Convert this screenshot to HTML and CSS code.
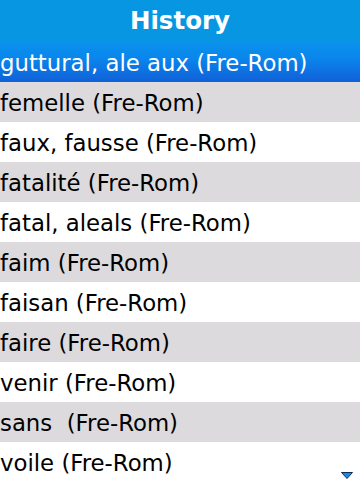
FILE: index.html
```html
<!DOCTYPE html>
<html>
<head>
<meta charset="utf-8">
<link rel="stylesheet" href="styles.css">
</head>
<body>
<div class="screen">
  <div class="title">History</div>
  <ul class="list">
    <li class="item selected">guttural, ale aux (Fre-Rom)</li>
    <li class="item odd">femelle (Fre-Rom)</li>
    <li class="item">faux, fausse (Fre-Rom)</li>
    <li class="item odd">fatalité (Fre-Rom)</li>
    <li class="item">fatal, aleals (Fre-Rom)</li>
    <li class="item odd">faim (Fre-Rom)</li>
    <li class="item">faisan (Fre-Rom)</li>
    <li class="item odd">faire (Fre-Rom)</li>
    <li class="item">venir (Fre-Rom)</li>
    <li class="item odd">sans&nbsp; (Fre-Rom)</li>
    <li class="item">voile (Fre-Rom)</li>
  </ul>
  <svg class="more" width="12" height="7" viewBox="0 0 12 7"><polygon points="0.5,0.5 11.5,0.5 6,6.5" fill="#1a8ae8" stroke="#0b2f5a" stroke-width="1"/></svg>
</div>
</body>
</html>
```
FILE: styles.css
```css
html, body {
  margin: 0;
  padding: 0;
  background: #ffffff;
}
.screen {
  position: relative;
  width: 360px;
  height: 480px;
  overflow: hidden;
  font-family: "DejaVu Sans", sans-serif;
}
.title {
  height: 42px;
  line-height: 42px;
  background: #0797e2;
  color: #ffffff;
  font-weight: bold;
  font-size: 24.5px;
  text-align: center;
}
.list {
  list-style: none;
  margin: 0;
  padding: 0;
}
.item {
  box-sizing: border-box;
  height: 40px;
  padding-top: 2px;
  line-height: 38px;
  font-size: 22.8px;
  color: #000000;
  white-space: nowrap;
  background: #ffffff;
}
.item.odd {
  background: #dcdadc;
}
.item.selected {
  color: #ffffff;
  background: linear-gradient(to bottom, #0992ec 0%, #0a86ec 40%, #1160d8 100%);
}
.more {
  position: absolute;
  left: 341px;
  top: 472px;
}
```
